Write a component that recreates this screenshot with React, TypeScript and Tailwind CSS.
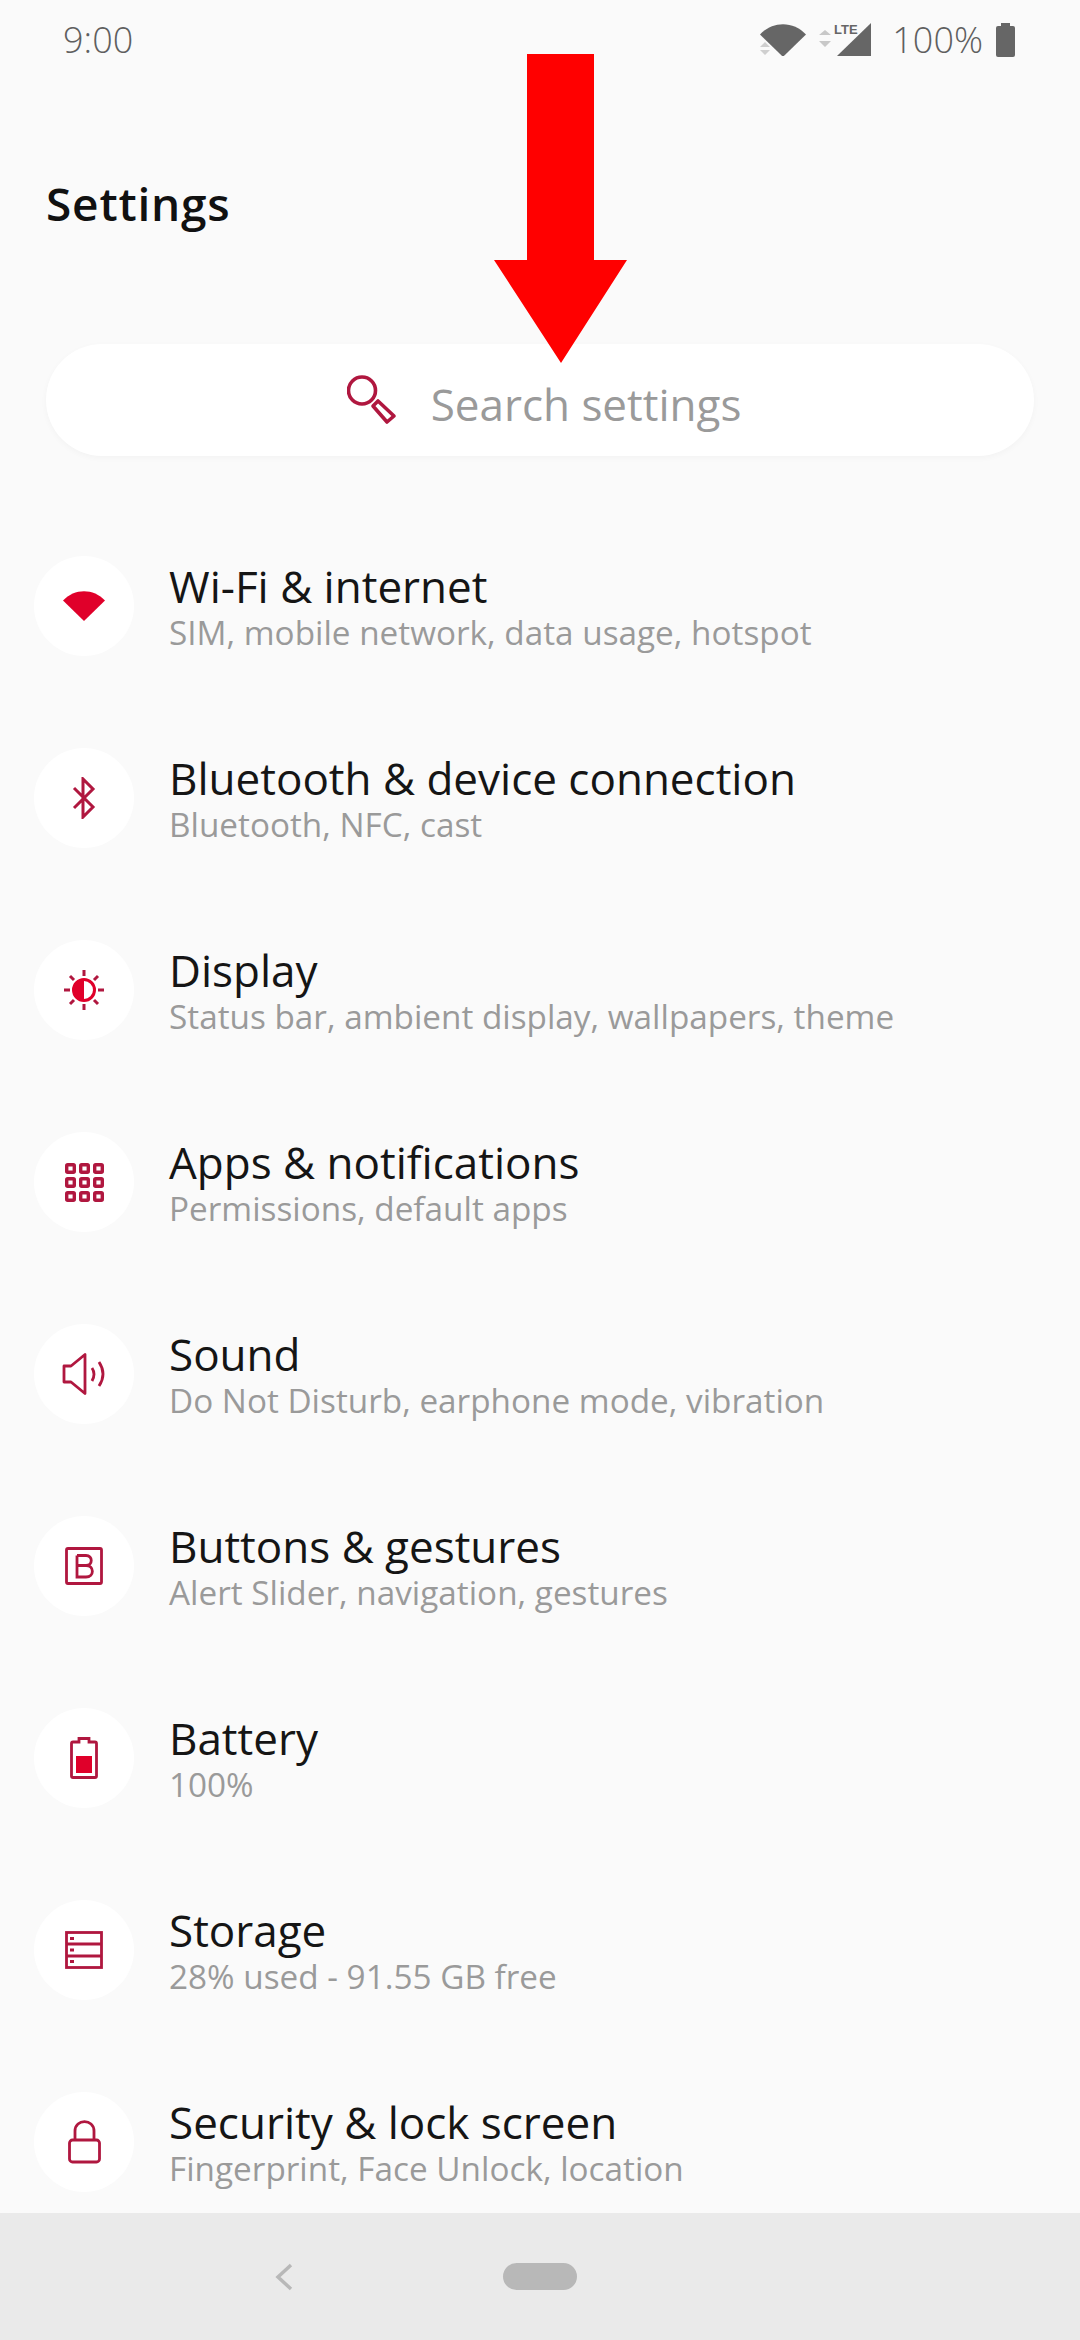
const font = { fontFamily: '"Open Sans", sans-serif' };

const RED = "#b0173f";
const FILL = "#e0002a";

function Wifi({ c, w }: { c: string; w: number }) {
  return (
    <svg width={w} height={(w * 50) / 70} viewBox="0 0 70 50" className="block">
      <path d="M0 16 C19 -5 51 -5 70 16 L35 50 Z" fill={c} />
    </svg>
  );
}

const icons: Record<string, JSX.Element> = {
  wifi: <Wifi c={FILL} w={42} />,
  bt: (
    <svg width="24" height="42" viewBox="0 0 24 42" fill="none" stroke={RED} strokeWidth="3">
      <path d="M2 11 L21 30 L11 40 V2 L21 12 L2 31" />
    </svg>
  ),
  display: (
    <svg width="40" height="40" viewBox="0 0 40 40" fill="none" stroke={RED} strokeWidth="3">
      <circle cx="20" cy="20" r="10.5" stroke={FILL} />
      <path d="M20 9 A11 11 0 0 0 20 31 Z" fill={FILL} stroke="none" />
      <path d="M20 0 V6 M20 34 V40 M0 20 H6 M34 20 H40 M6 6 L10 10 M30 30 L34 34 M34 6 L30 10 M10 30 L6 34" />
    </svg>
  ),
  apps: (
    <svg width="39" height="39" viewBox="0 0 39 39" fill="none" stroke={RED} strokeWidth="3.4">
      {[0, 14, 28].map((x) =>
        [0, 14, 28].map((y) => <rect key={`${x}-${y}`} x={x + 1.7} y={y + 1.7} width="7.6" height="7.6" rx="1" />)
      )}
    </svg>
  ),
  sound: (
    <svg width="44" height="42" viewBox="0 0 44 42" fill="none" stroke={RED} strokeWidth="2.8" strokeLinejoin="round">
      <path d="M2 13 H9 L23 1.5 V40.5 L9 29 H2 Z" />
      <path d="M30 15 Q34 21 30 28 M37 9 Q45 21 37 33" />
    </svg>
  ),
  buttons: (
    <svg width="38" height="38" viewBox="0 0 38 38" fill="none" stroke={RED} strokeWidth="2.8">
      <rect x="1.5" y="1.5" width="35" height="35" rx="1.5" />
      <path d="M12 8.5 H21 C28 8.5 28 18.5 21 18.5 H12 M21 18.5 C29.5 18.5 29.5 30 21 30 H12 V8.5" />
    </svg>
  ),
  battery: (
    <svg width="28" height="42" viewBox="0 0 28 42" fill="none" stroke={RED} strokeWidth="2.8">
      <path d="M3 5 H9 V1.5 H19 V5 H25 Q26.5 5 26.5 6.5 V39 Q26.5 40.5 25 40.5 H3 Q1.5 40.5 1.5 39 V6.5 Q1.5 5 3 5 Z" />
      <rect x="6" y="19" width="16" height="17" fill={FILL} stroke="none" />
    </svg>
  ),
  storage: (
    <svg width="38" height="38" viewBox="0 0 38 38" fill="none" stroke={RED} strokeWidth="2.8">
      <rect x="1.5" y="1.5" width="35" height="35" />
      <path d="M1.5 13 H36.5 M1.5 25 H36.5" />
      <path d="M5 7.5 H9 M5 19 H9 M5 30.5 H9" />
    </svg>
  ),
  lock: (
    <svg width="33" height="44" viewBox="0 0 33 44" fill="none" stroke={RED} strokeWidth="2.8">
      <rect x="1.5" y="20" width="30" height="22" rx="3" />
      <path d="M7 20 V11 C7 -1.5 26 -1.5 26 11 V20" />
    </svg>
  ),
};

const rows = [
  ["wifi", "Wi-Fi & internet", "SIM, mobile network, data usage, hotspot"],
  ["bt", "Bluetooth & device connection", "Bluetooth, NFC, cast"],
  ["display", "Display", "Status bar, ambient display, wallpapers, theme"],
  ["apps", "Apps & notifications", "Permissions, default apps"],
  ["sound", "Sound", "Do Not Disturb, earphone mode, vibration"],
  ["buttons", "Buttons & gestures", "Alert Slider, navigation, gestures"],
  ["battery", "Battery", "100%"],
  ["storage", "Storage", "28% used - 91.55 GB free"],
  ["lock", "Security & lock screen", "Fingerprint, Face Unlock, location"],
];

export default function App() {
  return (
    <div className="relative flex h-[2340px] w-[1080px] flex-col overflow-hidden bg-[#fafafa]" style={font}>
      <div className="flex h-[80px] shrink-0 items-center justify-between pl-[63px] pr-[65px] text-[36px] font-light text-[#5f5f5f]">
        <span>9:00</span>
        <div className="flex items-center">
          <div className="relative mr-[13px]">
            <Wifi c="#666666" w={46} />
            <svg className="absolute bottom-[1px] left-0" width="10" height="13" viewBox="0 0 10 13">
              <path d="M0 5 L5 0 L10 5 Z M0 8 H10 L5 13 Z" fill="#cfcfcf" />
            </svg>
          </div>
          <svg width="53" height="36" viewBox="0 0 53 36" className="mr-[20px] block">
            <path d="M52 1 V34 H18 Z" fill="#666666" />
            <path d="M0 13 L6 8 L12 13 Z M0 19 H12 L6 25 Z" fill="#c8c8c8" />
            <text x="15" y="12" fontSize="13" fontWeight="700" fill="#666666" fontFamily="Liberation Sans">LTE</text>
          </svg>
          <span className="mr-[13px]">100%</span>
          <div className="relative h-[31px] w-[19px] translate-y-[1px] rounded-[2px] bg-[#666666]">
            <div className="absolute left-[5px] top-[-3px] h-[3px] w-[9px] bg-[#666666]" />
          </div>
        </div>
      </div>

      <div className="h-[264px] shrink-0 pl-[46px] pt-[98px] text-[46px] leading-[50px] font-semibold tracking-[0.8px] text-[#111111]">
        Settings
      </div>

      <div className="mx-[46px] flex h-[112px] shrink-0 items-center justify-center gap-[34px] rounded-[56px] bg-white pl-[8px] shadow-[0_2px_6px_rgba(0,0,0,0.03)]">
        <svg width="50" height="50" viewBox="0 0 50 50" fill="none" stroke={RED} strokeWidth="3.6">
          <circle cx="15" cy="15.5" r="13.5" />
          <path d="M26 31 L31 26 L47 41 L40 47 Z" strokeLinejoin="round" />
        </svg>
        <span className="pt-[7px] text-[44px] leading-[60px] text-[#9a9a9a]">Search settings</span>
      </div>

      <div className="mt-[54px] flex-1 overflow-hidden">
        {rows.map(([icon, title, sub]) => (
          <div key={title} className="flex h-[192px] items-center gap-[35px] pl-[34px]">
            <div className="flex h-[100px] w-[100px] shrink-0 items-center justify-center rounded-full bg-white">
              {icons[icon]}
            </div>
            <div>
              <div className="text-[44px] leading-[52px] text-[#151515]">{title}</div>
              <div className="text-[33.3px] leading-[40px] text-[#9a9a9a]">{sub}</div>
            </div>
          </div>
        ))}
      </div>

      <div className="flex h-[127px] shrink-0 items-center justify-center bg-[#eaeaea]">
        <svg width="18" height="28" viewBox="0 0 18 28" fill="none" stroke="#b8b8b8" strokeWidth="3.5" className="mr-[210px]">
          <path d="M16 2 L3 14 L16 26" />
        </svg>
        <div className="h-[27px] w-[74px] rounded-full bg-[#b8b8b8]" />
        <div className="w-[228px]" />
      </div>

      <svg className="absolute left-[494px] top-[54px]" width="133" height="310" viewBox="0 0 133 310">
        <path d="M33 0 H100 V206 H133 L67 309 L0 206 H33 Z" fill="#ff0000" />
      </svg>
    </div>
  );
}
